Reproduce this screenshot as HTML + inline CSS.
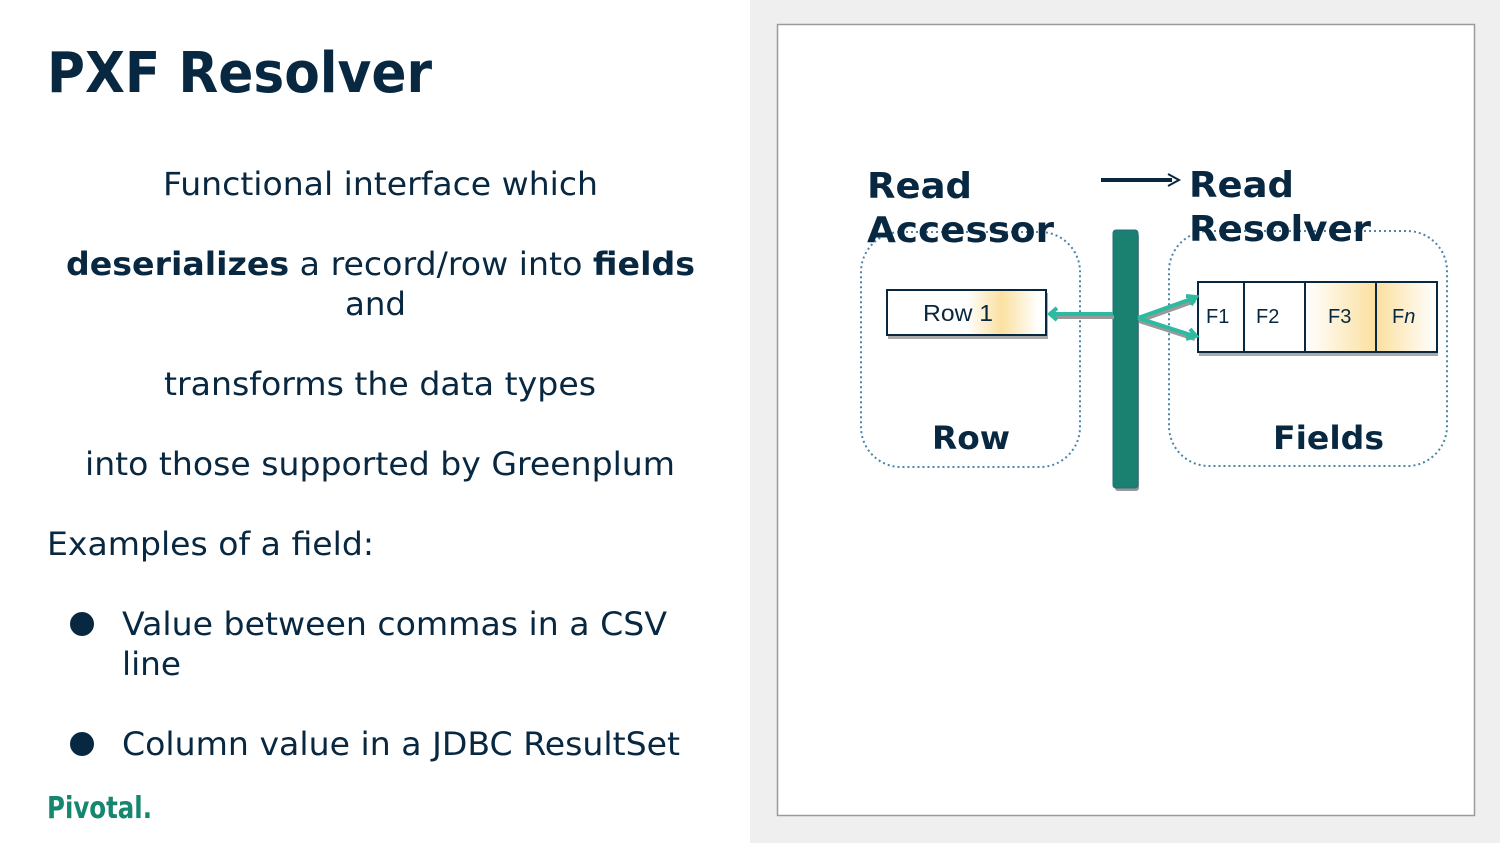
<!DOCTYPE html>
<html><head><meta charset="utf-8"><style>
html,body{margin:0;padding:0;width:1500px;height:843px;overflow:hidden;background:#fff}
svg{display:block}
text{font-family:"DejaVu Sans","Liberation Sans",sans-serif;fill:#082841}
text.lib{font-family:"Liberation Sans",sans-serif}
</style></head><body>
<svg width="1500" height="843" viewBox="0 0 1500 843" xmlns="http://www.w3.org/2000/svg">
<defs>
<linearGradient id="g1" x1="0" x2="1"><stop offset="0.5" stop-color="#fff"/><stop offset="0.72" stop-color="#fbe0a0"/><stop offset="0.95" stop-color="#fff"/></linearGradient>
<linearGradient id="g2" x1="0" x2="1"><stop offset="0" stop-color="#fff"/><stop offset="1" stop-color="#fbe0a0"/></linearGradient>
<linearGradient id="g3" x1="0" x2="1"><stop offset="0" stop-color="#fbe0a0"/><stop offset="1" stop-color="#fff"/></linearGradient>
</defs>
<rect x="750" y="0" width="750" height="843" fill="#efefef"/>
<rect x="777.5" y="24.5" width="697" height="791" fill="#fff" stroke="#9a9a9a" stroke-width="1.5"/>

<text x="47" y="92" font-size="56" font-weight="bold" textLength="385" lengthAdjust="spacingAndGlyphs">PXF Resolver</text>
<text x="163" y="195" font-size="32" textLength="435" lengthAdjust="spacingAndGlyphs">Functional interface which</text>
<text x="66" y="275" font-size="32" textLength="629" lengthAdjust="spacingAndGlyphs"><tspan font-weight="bold">deserializes</tspan> a record/row into <tspan font-weight="bold">fields</tspan></text>
<text x="345" y="315" font-size="32" textLength="61" lengthAdjust="spacingAndGlyphs">and</text>
<text x="164" y="395" font-size="32" textLength="432" lengthAdjust="spacingAndGlyphs">transforms the data types</text>
<text x="85" y="475" font-size="32" textLength="590" lengthAdjust="spacingAndGlyphs">into those supported by Greenplum</text>
<text x="47" y="555" font-size="32" textLength="327" lengthAdjust="spacingAndGlyphs">Examples of a field:</text>
<circle cx="82" cy="624" r="12" fill="#082841"/>
<text x="122" y="635" font-size="32" textLength="545" lengthAdjust="spacingAndGlyphs">Value between commas in a CSV</text>
<text x="122" y="675" font-size="32" textLength="59" lengthAdjust="spacingAndGlyphs">line</text>
<circle cx="82" cy="744" r="12" fill="#082841"/>
<text x="122" y="755" font-size="32" textLength="558" lengthAdjust="spacingAndGlyphs">Column value in a JDBC ResultSet</text>
<text x="47" y="818" font-size="30" font-weight="bold" style="fill:#16876f" textLength="105" lengthAdjust="spacingAndGlyphs">Pivotal.</text>

<rect x="861" y="232" width="219" height="235" rx="40" fill="none" stroke="#4a86a8" stroke-width="2" stroke-dasharray="2 3"/>
<rect x="1169" y="231" width="278" height="235" rx="40" fill="none" stroke="#4a86a8" stroke-width="2" stroke-dasharray="2 3"/>
<text x="867" y="198" font-size="36" font-weight="bold" textLength="105" lengthAdjust="spacingAndGlyphs">Read</text>
<text x="867" y="242" font-size="36" font-weight="bold" textLength="187" lengthAdjust="spacingAndGlyphs">Accessor</text>
<text x="1189" y="197" font-size="36" font-weight="bold" textLength="105" lengthAdjust="spacingAndGlyphs">Read</text>
<text x="1189" y="241" font-size="36" font-weight="bold" textLength="182" lengthAdjust="spacingAndGlyphs">Resolver</text>
<line x1="1101" y1="180" x2="1172" y2="180" stroke="#082841" stroke-width="4"/>
<path d="M1168 174 L1179 180 L1168 186" fill="none" stroke="#082841" stroke-width="2"/>
<text x="932" y="449" font-size="32" font-weight="bold" textLength="78" lengthAdjust="spacingAndGlyphs">Row</text>
<text x="1273" y="449" font-size="32" font-weight="bold" textLength="111" lengthAdjust="spacingAndGlyphs">Fields</text>

<rect x="888" y="293" width="160" height="46" fill="#aaa"/>
<rect x="887" y="290" width="159" height="45" fill="url(#g1)" stroke="#082841" stroke-width="2"/>
<text class="lib" x="923" y="321" font-size="23" textLength="70" lengthAdjust="spacingAndGlyphs">Row 1</text>

<rect x="1199" y="285" width="239" height="71" fill="#aaa"/>
<rect x="1198" y="282" width="239" height="70" fill="#fff" stroke="#082841" stroke-width="2"/>
<rect x="1306" y="283" width="69" height="68" fill="url(#g2)"/>
<rect x="1377" y="283" width="59" height="68" fill="url(#g3)"/>
<line x1="1244" y1="282" x2="1244" y2="352" stroke="#082841" stroke-width="2"/>
<line x1="1305" y1="282" x2="1305" y2="352" stroke="#082841" stroke-width="2"/>
<line x1="1376" y1="282" x2="1376" y2="352" stroke="#082841" stroke-width="2"/>
<text class="lib" x="1206" y="323" font-size="20">F1</text>
<text class="lib" x="1256" y="323" font-size="20">F2</text>
<text class="lib" x="1328" y="323" font-size="20">F3</text>
<text class="lib" x="1392" y="323" font-size="20">F<tspan font-style="italic">n</tspan></text>

<rect x="1115" y="233" width="24" height="258" rx="3" fill="#999"/>
<rect x="1113" y="230" width="25" height="258" rx="3" fill="#1a8070" stroke="#2a6a80" stroke-width="1"/>
<g stroke="#999" stroke-width="4" fill="none" transform="translate(1,3)">
<line x1="1113" y1="314" x2="1052" y2="314"/>
<line x1="1138" y1="318" x2="1194" y2="298"/>
<line x1="1138" y1="318" x2="1194" y2="336"/>
</g>
<g stroke="#2cbaa0" stroke-width="4" fill="none">
<line x1="1113" y1="314" x2="1052" y2="314"/>
<path d="M1057 308 L1050 314 L1057 320"/>
<line x1="1138" y1="318" x2="1194" y2="298"/>
<path d="M1186 296 L1196 297 L1191 305"/>
<line x1="1138" y1="318" x2="1194" y2="336"/>
<path d="M1190 329 L1196 336 L1186 339"/>
</g>
</svg>
</body></html>
